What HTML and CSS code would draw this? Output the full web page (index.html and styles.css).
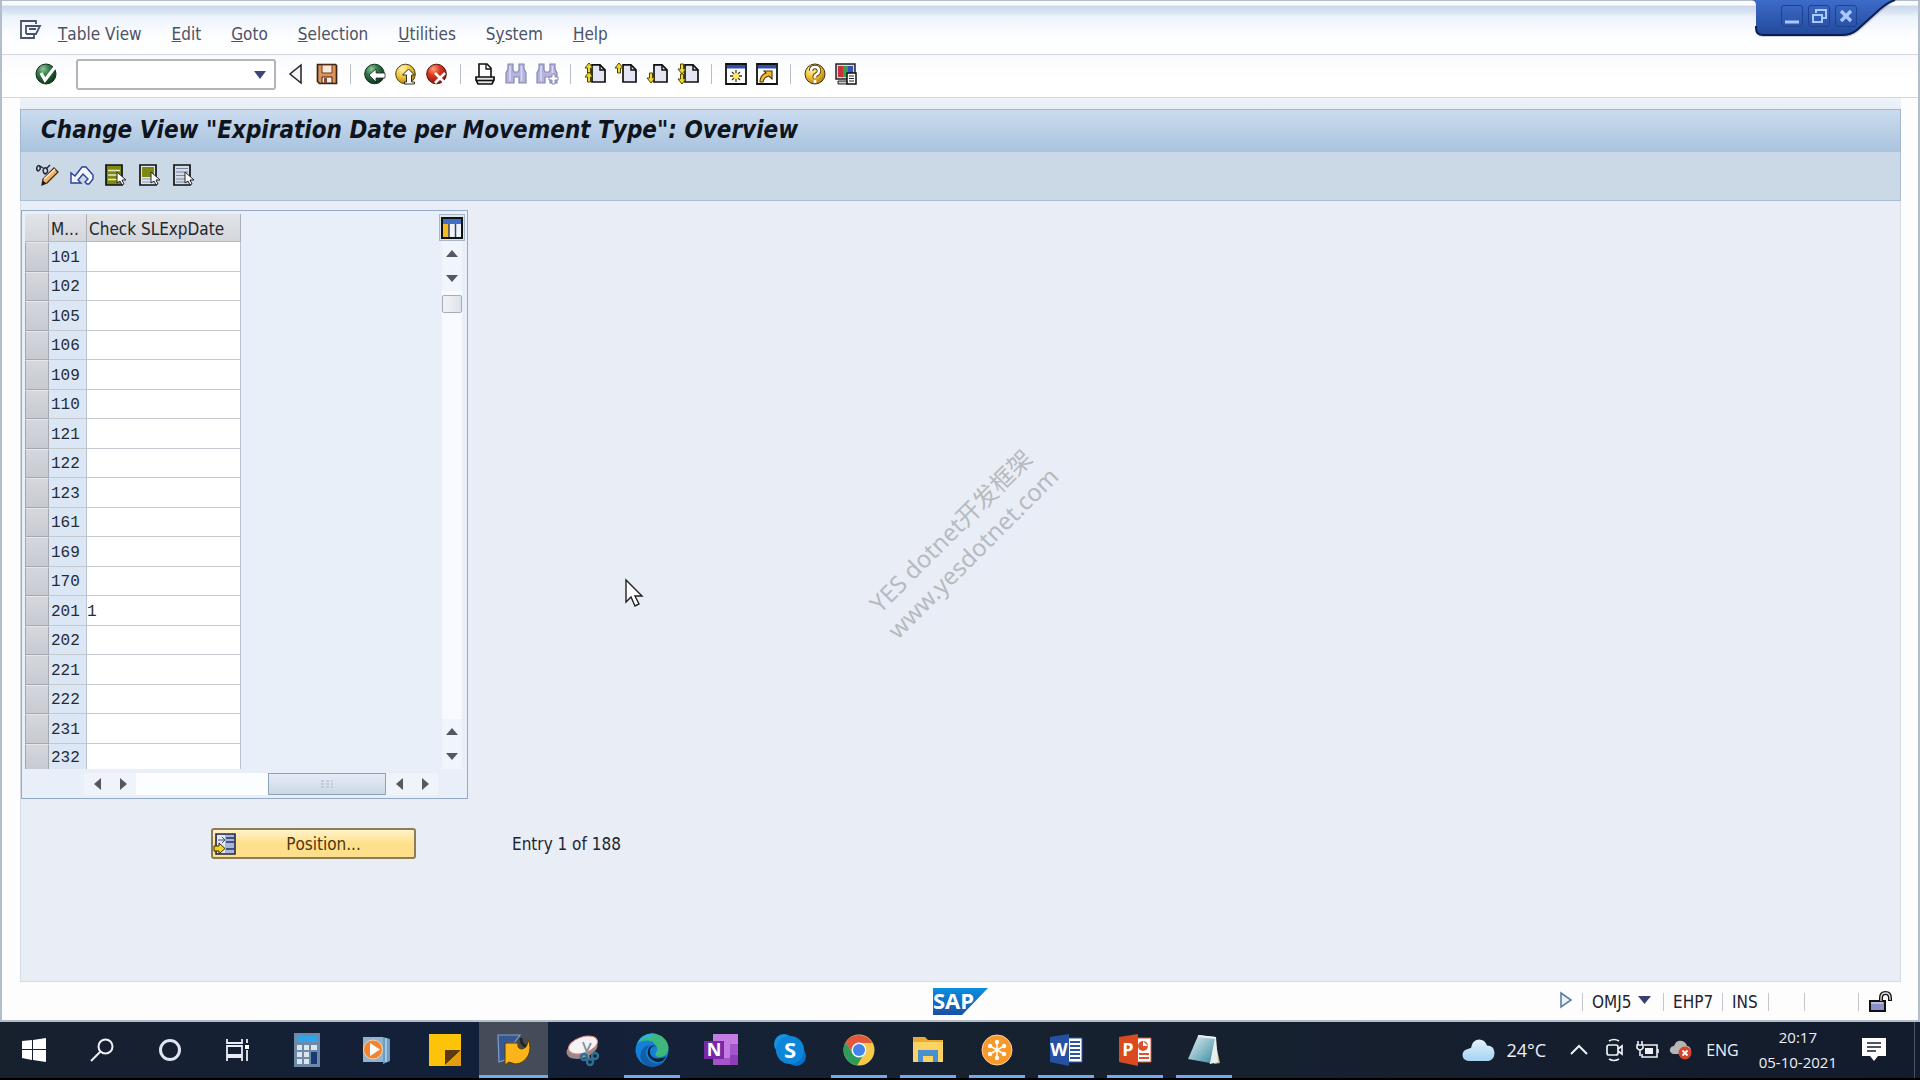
FILE: index.html
```html
<!DOCTYPE html>
<html lang="en">
<head>
<meta charset="utf-8">
<title>Change View "Expiration Date per Movement Type": Overview</title>
<link rel="stylesheet" href="styles.css">
</head>
<body>
<svg class="defs" aria-hidden="true">
  <defs>
    <radialGradient id="gGreen" cx=".35" cy=".25" r=".8"><stop offset="0" stop-color="#8fc79a"/><stop offset=".4" stop-color="#2f7a45"/><stop offset="1" stop-color="#0b3018"/></radialGradient>
    <radialGradient id="gGold" cx=".35" cy=".25" r=".8"><stop offset="0" stop-color="#fff6b0"/><stop offset=".5" stop-color="#f2c43a"/><stop offset="1" stop-color="#b07a10"/></radialGradient>
    <radialGradient id="gRed" cx=".35" cy=".25" r=".8"><stop offset="0" stop-color="#ffa080"/><stop offset=".4" stop-color="#dc3a20"/><stop offset="1" stop-color="#801008"/></radialGradient>
    <linearGradient id="gWin" x1="0" y1="0" x2="0" y2="1"><stop offset="0" stop-color="#3d6bc8"/><stop offset="1" stop-color="#224a9c"/></linearGradient>
    <linearGradient id="gSap" x1="0" y1="0" x2="0" y2="1"><stop offset="0" stop-color="#0a8fe0"/><stop offset="1" stop-color="#1a4fa5"/></linearGradient>
    <linearGradient id="gCloud" x1="0" y1="0" x2="0" y2="1"><stop offset="0" stop-color="#e2f1fc"/><stop offset="1" stop-color="#a5d2f2"/></linearGradient>
    <linearGradient id="gPad" x1="0" y1="0" x2="1" y2="1"><stop offset="0" stop-color="#e4f1f4"/><stop offset="1" stop-color="#3c8ba0"/></linearGradient>
    <g id="page"><path d="M0 .8h8l5 5V18H0z" fill="#e4e6f4" stroke="#111" stroke-width="1.7"/><path d="M8 1v5h5" fill="none" stroke="#111" stroke-width="1.5"/></g>
    <g id="binoc"><path d="M1 20V10L3 6V1h5v6l1 2h4l1-2V1h5v5l2 4v10h-7v-6h-5v6z" fill="#b4b5de" stroke="#8788b4" stroke-width="1.2"/><path d="M5 3v15M16.500 3v15" stroke="#d6d7f2" stroke-width="1.6"/></g>
    <path id="arrUp" d="M4 0l4 5H5.500v5h-3V5H0z" fill="#f0dc28" stroke="#4c4400" stroke-width="1"/>
    <path id="arrDn" d="M4 10l4-5H5.500V0h-3v5H0z" fill="#f0dc28" stroke="#4c4400" stroke-width="1"/>
    <path id="pick" d="M0 0v11l3-2 2 4 2-1-2-4h4z" fill="#fff" stroke="#223" stroke-width="1"/>
  </defs>
</svg>

<div class="window">
  <nav class="menubar" aria-label="Menu">
    <button class="menu-icon" aria-label="System menu"><svg width="22" height="20" viewBox="0 0 22 20" fill="none" stroke="#49526e" stroke-width="1.8"><path d="M16 4V1H1v17h13v-3M6 14V6h14l-4 8H6M6 6h12M9 9h7"/></svg></button>
    <a class="menu" href="#"><u>T</u>able View</a>
    <a class="menu" href="#"><u>E</u>dit</a>
    <a class="menu" href="#"><u>G</u>oto</a>
    <a class="menu" href="#"><u>S</u>election</a>
    <a class="menu" href="#"><u>U</u>tilities</a>
    <a class="menu" href="#">S<u>y</u>stem</a>
    <a class="menu" href="#"><u>H</u>elp</a>
  </nav>

  <div class="win-controls">
    <svg class="win-shape" width="148" height="40" viewBox="0 0 148 40"><path d="M0 0q4 1 4 6v24q0 7 7 7h80q9 0 15-5l24-21q9-8 16-11z" fill="#8e9bb8" opacity=".45"/><path d="M0 0q4 1 4 5v23q0 7 7 7h79q9 0 15-5l22-20q9-8 16-10z" fill="url(#gWin)"/><path d="M4 26v2q0 7 7 7h79q9 0 15-5l22-20q9-8 16-10" fill="none" stroke="#0c1e50" stroke-width="2"/></svg>
    <button class="win-btn" aria-label="Minimize"><svg width="20" height="20" viewBox="0 0 20 20"><path d="M3 16h14" stroke="#a9c9ff" stroke-width="3"/></svg></button>
    <button class="win-btn" aria-label="Restore"><svg width="20" height="20" viewBox="0 0 20 20" fill="none" stroke="#a9c9ff" stroke-width="2"><path d="M7 7V4h10v8h-3M4 9h9v7H4z"/></svg></button>
    <button class="win-btn" aria-label="Close"><svg width="20" height="20" viewBox="0 0 20 20"><path d="M5 5l10 10M15 5L5 15" stroke="#a9c9ff" stroke-width="3.400"/></svg></button>
  </div>

  <div class="toolbar">
    <button class="tool" aria-label="Enter"><svg width="22" height="22" viewBox="0 0 22 22"><circle cx="11" cy="11" r="10" fill="url(#gGreen)" stroke="#10301a"/><path d="M6 10l4 7L20 4" fill="none" stroke="#fff" stroke-width="3.200"/></svg></button>
    <span class="command"><input class="command-input" type="text" aria-label="Command"><svg class="command-arrow" width="12" height="8" viewBox="0 0 12 8"><path d="M0 0h12L6 8z" fill="#3c4678"/></svg></span>
    <button class="tool" aria-label="Collapse"><svg width="22" height="22" viewBox="0 0 22 22"><path d="M16 2v18L5 11z" fill="#f4f5f8" stroke="#222" stroke-width="1.500"/></svg></button>
    <button class="tool" aria-label="Save"><svg width="22" height="22" viewBox="0 0 22 22"><path d="M1.500 1.500h18l1 1v18h-17l-2-2z" fill="#dd945a" stroke="#3a2216" stroke-width="1.700"/><path d="M6 2h10v8H6z" fill="#fbe9dc" stroke="#6b3a20"/><path d="M6 14h10v6H6z" fill="#eee" stroke="#3a2216"/><path d="M8 15h3v5H8z" fill="#854a28"/></svg></button>
    <span class="sep"></span>
    <button class="tool" aria-label="Back"><svg width="22" height="22" viewBox="0 0 22 22"><circle cx="10.500" cy="11" r="9.800" fill="url(#gGreen)" stroke="#10301a"/><path d="M5 12l7-6v4h9v5h-9v4z" fill="#fff" stroke="#223" stroke-width=".8"/></svg></button>
    <button class="tool" aria-label="Exit"><svg width="22" height="22" viewBox="0 0 22 22"><circle cx="10.500" cy="11" r="9.800" fill="url(#gGold)" stroke="#554010"/><path d="M13.500 6l6 6h-3v7h3v2h-10v-2h2v-7h-4z" fill="#fff" stroke="#332" stroke-width="1"/></svg></button>
    <button class="tool" aria-label="Cancel"><svg width="22" height="22" viewBox="0 0 22 22"><circle cx="10.500" cy="11" r="9.800" fill="url(#gRed)" stroke="#571010"/><path d="M9 10l10 10M19 10L9 20" stroke="#fff" stroke-width="2.600"/></svg></button>
    <span class="sep"></span>
    <button class="tool" aria-label="Print"><svg width="22" height="22" viewBox="0 0 22 22"><path d="M5 14V1h8l4 4v9" fill="#fff" stroke="#111" stroke-width="1.600"/><path d="M12 1v5h5" fill="none" stroke="#111" stroke-width="1.300"/><path d="M2 14h18v3l-2 4H4l-2-4z" fill="#e6e7ee" stroke="#111" stroke-width="1.700"/><path d="M2 17.500h18" stroke="#111" stroke-width="1.600"/></svg></button>
    <button class="tool" aria-label="Find"><svg width="22" height="22" viewBox="0 0 22 22"><use href="#binoc"/></svg></button>
    <button class="tool" aria-label="Find next"><svg width="22" height="22" viewBox="0 0 22 22"><use href="#binoc"/><path d="M13 14h3v-3h3v3h3v3h-3v4h-3v-4h-3z" fill="#fff" stroke="#8788b4"/></svg></button>
    <span class="sep"></span>
    <button class="tool" aria-label="First page"><svg width="22" height="22" viewBox="0 0 22 22"><use href="#page" x="8" y="1"/><use href="#arrUp" x="1" y="0"/><use href="#arrUp" x="1" y="9"/></svg></button>
    <button class="tool" aria-label="Previous page"><svg width="22" height="22" viewBox="0 0 22 22"><use href="#page" x="8" y="1"/><use href="#arrUp" x="0" y="0"/></svg></button>
    <button class="tool" aria-label="Next page"><svg width="22" height="22" viewBox="0 0 22 22"><use href="#page" x="8" y="1"/><use href="#arrDn" x="1" y="10"/></svg></button>
    <button class="tool" aria-label="Last page"><svg width="22" height="22" viewBox="0 0 22 22"><use href="#page" x="8" y="1"/><use href="#arrDn" x="1" y="1"/><use href="#arrDn" x="1" y="11"/></svg></button>
    <span class="sep"></span>
    <button class="tool" aria-label="New session"><svg width="22" height="22" viewBox="0 0 22 22"><path d="M1 1h20v20H1z" fill="#fff" stroke="#111" stroke-width="1.800"/><path d="M2 2h18v3.500H2z" fill="#2d50ae"/><path d="M11 7v12M5 13h12M7 9l8 8M15 9l-8 8" stroke="#3d3a10" stroke-width="1.300"/><circle cx="11" cy="13" r="3" fill="#ffe95c"/></svg></button>
    <button class="tool" aria-label="Create shortcut"><svg width="22" height="22" viewBox="0 0 22 22"><path d="M1 1h20v20H1z" fill="#fff" stroke="#111" stroke-width="1.800"/><path d="M2 2h18v3.500H2z" fill="#2d50ae"/><path d="M8 8h8v8l-3-3q-5 1-6 6H4q0-7 6-9z" fill="#f4b930" stroke="#4c3806" stroke-width="1.100"/></svg></button>
    <span class="sep"></span>
    <button class="tool" aria-label="Help"><svg width="22" height="22" viewBox="0 0 22 22"><circle cx="11" cy="11" r="10" fill="url(#gGold)" stroke="#443408"/><path d="M7 8q0-4 4-4t4 4q0 2-2.500 3.500T11 15" fill="none" stroke="#5a4208" stroke-width="4.400"/><path d="M7 8q0-4 4-4t4 4q0 2-2.500 3.500T11 15M11 17v3" fill="none" stroke="#fff" stroke-width="2.600"/></svg></button>
    <button class="tool" aria-label="Customize layout"><svg width="22" height="22" viewBox="0 0 22 22"><path d="M1 1h19v15H1z" fill="#d6d8e2" stroke="#222" stroke-width="1.500"/><path d="M3 3h5v11H3z" fill="#c8323c"/><path d="M8 3h5v11H8z" fill="#38a04c"/><path d="M13 3h5v11h-5z" fill="#3654b8"/><path d="M3 18h9v3H3z" fill="#c7c9d4" stroke="#222"/><path d="M12 10h9v11h-9z" fill="#fff" stroke="#111" stroke-width="1.500"/><path d="M14 13h5M14 15.500h5M14 18h5" stroke="#222"/></svg></button>
  </div>

  <main class="screen">
    <h1 class="title">Change View "Expiration Date per Movement Type": Overview</h1>
    <div class="app-toolbar">
      <button class="tool" aria-label="Display or change"><svg width="24" height="22" viewBox="0 0 24 22"><path d="M1 3q2-3 3 0t-2 4q-2-1-1-4M7 6q2-4 4-1t-2 5q-2-1-2-4M4 2l3 2M11 4l3-3" fill="none" stroke="#223" stroke-width="1.400"/><path d="M6 21l1-6L18 4l4 4-11 11z" fill="#f3b265" stroke="#3b2a14" stroke-width="1.300"/><path d="M8 15L19 5" stroke="#ffe9c8" stroke-width="1.600"/><path d="M6 21l1-4 3 2z" fill="#111"/></svg></button>
      <button class="tool" aria-label="Undo"><svg width="24" height="20" viewBox="0 0 24 20"><path d="M1 8v10h10l-3-3 5-6 5 5-3 3 2 2h2l4-5v-4l-7-8h-4L5 11z" fill="#f4f7fe" stroke="#2c3f9a" stroke-width="1.400"/></svg></button>
      <button class="tool" aria-label="Select all"><svg width="22" height="22" viewBox="0 0 22 22"><path d="M1 1h16v20H1z" fill="#7c8a10" stroke="#111" stroke-width="1.700"/><path d="M3 6.500h12M3 11h12M3 15.500h12" stroke="#e5eac4" stroke-width="1.500"/><use href="#pick" x="12" y="8"/></svg></button>
      <button class="tool" aria-label="Select block"><svg width="22" height="22" viewBox="0 0 22 22"><path d="M1 1h16v20H1z" fill="#dfe6ee" stroke="#111" stroke-width="1.700"/><path d="M3 3h12v10H3z" fill="#7c8a10"/><path d="M3 15h12M3 18h12" stroke="#8c9aac"/><use href="#pick" x="12" y="8"/></svg></button>
      <button class="tool" aria-label="Deselect all"><svg width="22" height="22" viewBox="0 0 22 22"><path d="M1 1h16v20H1z" fill="#d3dce8" stroke="#111" stroke-width="1.700"/><path d="M3 4.500h12M3 8h12M3 11.500h12M3 15h12M3 18h12" stroke="#77859a" stroke-width="1.200"/><use href="#pick" x="12" y="8"/></svg></button>
    </div>

    <div class="content">
      <section class="table-control">
        <div class="table-area">
          <table class="grid">
            <thead><tr><th class="c-sel"></th><th class="c-mvt">M...</th><th class="c-chk">Check SLExpDate</th></tr></thead>
            <tbody>
              <tr><td class="sel"></td><td class="mvt">101</td><td><input class="cell" aria-label="Check 101"></td></tr>
              <tr><td class="sel"></td><td class="mvt">102</td><td><input class="cell" aria-label="Check 102"></td></tr>
              <tr><td class="sel"></td><td class="mvt">105</td><td><input class="cell" aria-label="Check 105"></td></tr>
              <tr><td class="sel"></td><td class="mvt">106</td><td><input class="cell" aria-label="Check 106"></td></tr>
              <tr><td class="sel"></td><td class="mvt">109</td><td><input class="cell" aria-label="Check 109"></td></tr>
              <tr><td class="sel"></td><td class="mvt">110</td><td><input class="cell" aria-label="Check 110"></td></tr>
              <tr><td class="sel"></td><td class="mvt">121</td><td><input class="cell" aria-label="Check 121"></td></tr>
              <tr><td class="sel"></td><td class="mvt">122</td><td><input class="cell" aria-label="Check 122"></td></tr>
              <tr><td class="sel"></td><td class="mvt">123</td><td><input class="cell" aria-label="Check 123"></td></tr>
              <tr><td class="sel"></td><td class="mvt">161</td><td><input class="cell" aria-label="Check 161"></td></tr>
              <tr><td class="sel"></td><td class="mvt">169</td><td><input class="cell" aria-label="Check 169"></td></tr>
              <tr><td class="sel"></td><td class="mvt">170</td><td><input class="cell" aria-label="Check 170"></td></tr>
              <tr><td class="sel"></td><td class="mvt">201</td><td><input class="cell" aria-label="Check 201" value="1"></td></tr>
              <tr><td class="sel"></td><td class="mvt">202</td><td><input class="cell" aria-label="Check 202"></td></tr>
              <tr><td class="sel"></td><td class="mvt">221</td><td><input class="cell" aria-label="Check 221"></td></tr>
              <tr><td class="sel"></td><td class="mvt">222</td><td><input class="cell" aria-label="Check 222"></td></tr>
              <tr><td class="sel"></td><td class="mvt">231</td><td><input class="cell" aria-label="Check 231"></td></tr>
              <tr><td class="sel"></td><td class="mvt">232</td><td><input class="cell" aria-label="Check 232"></td></tr>
            </tbody>
          </table>
          <div class="vbar">
            <button class="config" aria-label="Table settings"><svg width="22" height="22" viewBox="0 0 22 22"><path d="M1 1h20v20H1z" fill="#eef2fa" stroke="#111" stroke-width="2"/><path d="M2 2h18v5H2z" fill="#3c70c8"/><path d="M2 7h6v13H2z" fill="#f6bb20"/><path d="M8 7v13M14.500 7v13" stroke="#39455f" stroke-width="1.500"/></svg></button>
            <button class="arrow" aria-label="Scroll up"><svg width="12" height="7" viewBox="0 0 12 7"><path d="M0 7h12L6 0z" fill="#55585f"/></svg></button>
            <button class="arrow" aria-label="Page down"><svg width="12" height="7" viewBox="0 0 12 7"><path d="M0 0h12L6 7z" fill="#55585f"/></svg></button>
            <div class="vtrack"><div class="vthumb"></div></div>
            <button class="arrow" aria-label="Page up"><svg width="12" height="7" viewBox="0 0 12 7"><path d="M0 7h12L6 0z" fill="#55585f"/></svg></button>
            <button class="arrow" aria-label="Scroll down"><svg width="12" height="7" viewBox="0 0 12 7"><path d="M0 0h12L6 7z" fill="#55585f"/></svg></button>
          </div>
        </div>
        <div class="hbar">
          <button class="arrow" aria-label="Scroll left"><svg width="7" height="12" viewBox="0 0 7 12"><path d="M7 0v12L0 6z" fill="#55585f"/></svg></button>
          <button class="arrow" aria-label="Page right"><svg width="7" height="12" viewBox="0 0 7 12"><path d="M0 0v12l7-6z" fill="#55585f"/></svg></button>
          <div class="htrack"><div class="hthumb"><svg width="14" height="8" viewBox="0 0 14 8"><path d="M1 1h12M1 4h12M1 7h12" stroke="#a9b4c4" stroke-width="1" stroke-dasharray="3 2"/></svg></div></div>
          <button class="arrow" aria-label="Page left"><svg width="7" height="12" viewBox="0 0 7 12"><path d="M7 0v12L0 6z" fill="#55585f"/></svg></button>
          <button class="arrow" aria-label="Scroll right"><svg width="7" height="12" viewBox="0 0 7 12"><path d="M0 0v12l7-6z" fill="#55585f"/></svg></button>
        </div>
      </section>

      <div class="actions">
        <button class="position"><svg width="22" height="22" viewBox="0 0 22 22"><path d="M2 1h19v20H2z" fill="#a9b6dc" stroke="#222b48" stroke-width="1.600"/><path d="M3 2h8v18H3z" fill="#e3e7f2"/><path d="M12 5h8M12 9h8M12 16h8" stroke="#26325a" stroke-width="1.500"/><path d="M4 7h6M8 4l3 3-3 3" stroke="#444e6e" fill="none"/><path d="M0 13h5v-3l6 5.500L5 21v-3H0z" fill="#f6d422" stroke="#332a08"/></svg><span class="position-label">Position...</span></button>
        <span class="entry">Entry 1 of 188</span>
      </div>
    </div>
  </main>

  <footer class="statusbar">
    <span></span>
    <svg width="55" height="27" viewBox="0 0 55 27"><path d="M0 0h55L29 27H0z" fill="url(#gSap)"/><text class="sap-text" x="0" y="21">SAP</text></svg>
    <div class="status-cells">
      <button class="st-tri" aria-label="Show details"><svg width="12" height="16" viewBox="0 0 12 16"><path d="M1 1l10 7-10 7z" fill="#e8f2fa" stroke="#5e7ea4" stroke-width="1.600"/></svg></button>
      <span class="st st-tcode">OMJ5 <svg width="13" height="8" viewBox="0 0 13 8"><path d="M0 0h13L6.500 8z" fill="#394070"/></svg></span>
      <span class="st st-sys">EHP7</span>
      <span class="st st-ins">INS</span>
      <span class="st st-a"></span>
      <span class="st st-b"></span>
      <span class="st st-lock"><svg width="24" height="22" viewBox="0 0 24 22"><path d="M2 10h15v10H2z" fill="#8d90c6" stroke="#111" stroke-width="2"/><path d="M3 12h12" stroke="#c9cbe8" stroke-width="1.500"/><path d="M13 9V7q0-5 4.500-5T22 7v3" fill="none" stroke="#111" stroke-width="4"/><path d="M13 10V7q0-5 4.500-5T22 7v2" fill="none" stroke="#e4e4ea" stroke-width="1.300"/></svg></span>
    </div>
  </footer>
</div>

<div class="taskbar">
  <div class="system-buttons">
    <button class="task" aria-label="Start"><svg width="24" height="24" viewBox="0 0 24 24" fill="#fff"><path d="M0 3l10-1v9H0zM11 2l13-2v11H11zM0 12h10v10L0 20zM11 12h13v12l-13-2z"/></svg></button>
    <button class="task" aria-label="Search"><svg width="24" height="24" viewBox="0 0 24 24" fill="none" stroke="#eef1f6" stroke-width="2"><circle cx="15.500" cy="8.500" r="7"/><path d="M10.500 13.500L1 23"/></svg></button>
    <button class="task" aria-label="Cortana"><svg width="24" height="24" viewBox="0 0 24 24"><circle cx="12" cy="12" r="9.500" fill="none" stroke="#dfe6f2" stroke-width="3"/></svg></button>
    <button class="task" aria-label="Task view"><svg width="24" height="24" viewBox="0 0 24 24" fill="none" stroke="#e9edf4" stroke-width="1.800"><path d="M1 1v4h15V1M1 8h15v9H1zM1 23v-4h15v4M21 1v4M21 12v11"/><path d="M19 7h4v4h-4z" fill="#fff" stroke="none"/></svg></button>
  </div>
  <div class="apps">
    <button class="task" aria-label="Calculator"><svg width="28" height="34" viewBox="0 0 28 34"><path d="M1 0h26v34H1z" fill="#6f8aa6"/><path d="M4 3h20v6H4z" fill="#2ea4ea"/><path d="M4 12h5v5H4zM11 12h5v5h-5zM18 12h6v5h-6zM4 19h5v5H4zM11 19h5v5h-5zM4 26h5v5H4zM11 26h5v5h-5z" fill="#dbe5f0"/><path d="M18 19h6v12h-6z" fill="#173a72"/></svg></button>
    <button class="task" aria-label="Media player"><svg width="30" height="28" viewBox="0 0 30 28"><path d="M2 1h20v25H2z" fill="#8fb4d2"/><path d="M22 1l7 2v22l-7 3z" fill="#6d9cc4"/><path d="M25 2v24" stroke="#b7d3ea" stroke-width="1.500"/><circle cx="12" cy="13.500" r="9.500" fill="#ee8434" stroke="#ffd3a8"/><path d="M9 7l10 6.500L9 20z" fill="#fff"/></svg></button>
    <button class="task" aria-label="Sticky notes"><svg width="32" height="32" viewBox="0 0 32 32"><path d="M0 0h32v32H0z" fill="#fdc308"/><path d="M16 16h16L16 31z" fill="#5c3a12"/><path d="M32 16v16H16z" fill="#e39c10"/></svg></button>
    <button class="task active running" aria-label="SAP Logon"><svg width="34" height="32" viewBox="0 0 34 32"><path d="M1 1h22l-6 8H11v16l-9 3z" fill="#34588f" stroke="#7f9fd0" stroke-width="1.200"/><path d="M8 9h13q-1 6 4 6 6-1 6-10 4 9 0 17-5 8-13 8l-6-2-4 3z" fill="#fbb41a" stroke="#5a3c08"/><path d="M24 4q0 7 5 8" stroke="#2a2418" stroke-width="3" fill="none"/></svg></button>
    <button class="task" aria-label="Snipping tool"><svg width="34" height="32" viewBox="0 0 34 32"><ellipse cx="16" cy="15" rx="16" ry="9" transform="rotate(-18 16 15)" fill="#9b8688"/><ellipse cx="17" cy="11" rx="15" ry="8" transform="rotate(-18 17 11)" fill="#f6f2f4" stroke="#d8847e"/><path d="M17 8l6 16M25 9l-7 14" stroke="#8795a5" stroke-width="2"/><g fill="none" stroke="#2f7194" stroke-width="2.400"><circle cx="24" cy="28" r="3"/><circle cx="29" cy="22" r="3"/><circle cx="18" cy="23" r="3"/></g></svg></button>
    <button class="task running" aria-label="Edge"><svg width="34" height="34" viewBox="0 0 34 34"><circle cx="17" cy="17" r="16.500" fill="#1380d8"/><path d="M2 11Q7 0 18 .5 31 2 33.500 14q0 9-8 10-6 0-5-4 3-3 1-7-5-7-13-5-5 1-6.500 3z" fill="#3db77a"/><path d="M2 12Q7 3 17 5q-2-4 4-4l-4-.5Q6 1 2 12z" fill="#2fb2de"/><path d="M15 12q-7 6-2 14 6 7 16 3-6 6-14 4.500Q3 30 6 19q3-7 9-7z" fill="#155da8"/><path d="M21 13q-7 0-6 7 2 7 11 5 3 0 5-2-4 9-12 5-8-4-6-11 2-6 8-4z" fill="#142238"/></svg></button>
    <button class="task" aria-label="OneNote"><svg width="34" height="32" viewBox="0 0 34 32"><path d="M9 0h25v31H9z" fill="#c57be4"/><path d="M26 10h8v11h-8z" fill="#a257cc"/><path d="M26 21h8v10h-8z" fill="#8c3fb9"/><path d="M9 24h17v7H9z" fill="#a354c7"/><path d="M0 7h20v18H0z" fill="#7829a8"/><text class="tile-text" x="10" y="22">N</text></svg></button>
    <button class="task" aria-label="Skype"><svg width="32" height="32" viewBox="0 0 32 32"><circle cx="10" cy="10" r="10" fill="#1494e0"/><circle cx="22" cy="22" r="10" fill="#0870c8"/><circle cx="16" cy="16" r="14" fill="#0d86da"/><text class="skype-text" x="16" y="24">S</text></svg></button>
    <button class="task running" aria-label="Chrome"><svg width="32" height="32" viewBox="0 0 32 32"><circle cx="16" cy="16" r="15.500" fill="#f6c94a"/><path d="M2.600 8.200A15.500 15.500 0 0 1 29.400 9H16l-6 11z" fill="#e3573e"/><path d="M2.600 8.200A15.500 15.500 0 0 0 14 31.400l7-11.400-11 0z" fill="#2e9a5c"/><circle cx="16" cy="16" r="7.500" fill="#f2f5f8"/><circle cx="16" cy="16" r="6" fill="#4285ea"/></svg></button>
    <button class="task running" aria-label="File Explorer"><svg width="32" height="26" viewBox="0 0 32 26"><path d="M1 0h12l3 3h15v22H1z" fill="#e8ac30"/><path d="M1 5h30v20H1z" fill="#fcd265"/><path d="M6 13h20v12h-5v-6H11v6H6z" fill="#4a90cc"/></svg></button>
    <button class="task running" aria-label="GoTo"><svg width="32" height="32" viewBox="0 0 32 32"><circle cx="16" cy="16" r="15" fill="#f8982a" stroke="#ffd39a"/><path d="M16 8v16M9 12l14 8M23 12L9 20" stroke="#fff" stroke-width="1.500"/><g fill="#fff"><circle cx="16" cy="8" r="2.200"/><circle cx="16" cy="24" r="2.200"/><circle cx="9" cy="12" r="2.200"/><circle cx="23" cy="20" r="2.200"/><circle cx="23" cy="12" r="2.200"/><circle cx="9" cy="20" r="2.200"/></g></svg></button>
    <button class="task running" aria-label="Word"><svg width="32" height="32" viewBox="0 0 32 32"><path d="M18 4h14v24H18z" fill="#fff" stroke="#2b55a4"/><path d="M20 8h10M20 12h10M20 16h10M20 20h10M20 24h10" stroke="#2b55a4" stroke-width="1.800"/><path d="M0 3l19-3v32L0 28z" fill="#2650a2"/><text class="tile-text" x="9" y="22">W</text></svg></button>
    <button class="task running" aria-label="PowerPoint"><svg width="32" height="32" viewBox="0 0 32 32"><path d="M18 4h14v24H18z" fill="#fff" stroke="#d35230"/><circle cx="24" cy="12" r="5" fill="#d9532c"/><path d="M24 12V7l5 5z" fill="#fff"/><path d="M20 20h10M20 24h10" stroke="#d9532c" stroke-width="1.800"/><path d="M0 3l19-3v32L0 28z" fill="#d94a20"/><text class="tile-text" x="9" y="22">P</text></svg></button>
    <button class="task running" aria-label="Notepad"><svg width="32" height="32" viewBox="0 0 32 32"><path d="M26 2l6 27-6 1z" fill="#c9b98e"/><path d="M10 1l18 2 2 25-8 2z" fill="#e9eef0"/><path d="M10 2l17 2-5 25L0 25z" fill="url(#gPad)"/><path d="M10 2l17 2" stroke="#eceff2" stroke-width="2"/></svg></button>
  </div>
  <div class="tray">
    <span class="weather"><svg width="32" height="23" viewBox="0 0 32 23"><path d="M6 22a6 6 0 0 1-1-12Q7 9 8 9 9 1 16 .500q6 0 8 6 7 0 7.500 7 0 7-6 8.500z" fill="url(#gCloud)"/></svg>24°C</span>
    <svg class="t-chev" width="18" height="10" viewBox="0 0 18 10"><path d="M1 9l8-8 8 8" fill="none" stroke="#eef0f4" stroke-width="2"/></svg>
    <svg class="t-meet" width="18" height="24" viewBox="0 0 18 24" fill="none" stroke="#eef0f4" stroke-width="1.700"><path d="M3 3q5-3 10 0M3 21q5 3 10 0"/><rect x="1" y="7" width="11" height="10" rx="2"/><path d="M12 11l4-3v8l-4-3"/></svg>
    <svg class="t-batt" width="24" height="18" viewBox="0 0 24 18" fill="none" stroke="#eef0f4" stroke-width="1.600"><path d="M8 4h13v12H6v-3M22 8v4M2 0v4M6 0v4M1 4h6v3q-3 4-6 0zM4 9v6"/><path d="M9 7h8v6H9z" fill="#eef0f4" stroke="none"/></svg>
    <svg class="t-cloud" width="24" height="20" viewBox="0 0 24 20"><path d="M4 14q-4-2-3-5 1-3 4-3 2-6 8-5 4 1 5 5 3 0 4 4l-1 4z" fill="#b7b4b4"/><circle cx="16" cy="13" r="6.500" fill="#d8432c"/><path d="M13.500 10.500l5 5M18.500 10.500l-5 5" stroke="#fff" stroke-width="1.800"/></svg>
    <span class="lang">ENG</span>
    <time class="clock"><span>20:17</span><span>05-10-2021</span></time>
    <button class="notif" aria-label="Notifications"><svg width="24" height="24" viewBox="0 0 24 24"><path d="M0 0h24v18h-8l-4 5-4-5H0z" fill="#fff"/><path d="M5 5h14M5 9h14M5 13h9" stroke="#161e2c" stroke-width="1.600"/></svg></button>
  </div>
</div>

<div class="watermark">YES dotnet开发框架<br>www.yesdotnet.com</div>
<svg class="cursor" width="18" height="28" viewBox="0 0 18 28"><path d="M1 1v22l5-5 4 9 4-2-4-8h7z" fill="#fff" stroke="#222" stroke-width="1.400"/></svg>
</body>
</html>
```
FILE: styles.css
```css
* { box-sizing: border-box; }

body {
  margin: 0;
  min-height: 100vh;
  display: flex;
  flex-direction: column;
  position: relative;
  font-family: "DejaVu Sans Condensed", "DejaVu Sans", sans-serif;
  font-stretch: condensed;
  font-kerning: none;
  font-size: 17px;
  color: #1e2430;
  background: #000;
}

button {
  font: inherit;
  color: inherit;
  padding: 0;
  border: 0;
  background: none;
  display: flex;
  align-items: center;
  justify-content: center;
}

svg { display: block; flex: none; overflow: visible; }
.defs { position: absolute; width: 0; height: 0; }

/* Application window */
.window {
  flex: 1;
  display: flex;
  flex-direction: column;
  position: relative;
  border: 1px solid #b4bdcc;
  border-width: 1px 2px 2px;
  background: #fdfdfe;
}

.menubar {
  height: 54px;
  display: flex;
  align-items: center;
  gap: 30px;
  padding: 12px 18px 0;
  border-bottom: 1px solid #d2d6de;
  background: linear-gradient(#fafcff 0, #fafcff 4px, #cbd8ea 5px, #d6e1f1 10px, #edf3fc 16px, #fcfdff 34px, #fefefe);
}

.menu-icon { margin: 0 -14px 8px 0; }
.menu { color: #4c5264; text-decoration: none; }

.win-controls {
  position: absolute;
  top: 0;
  right: 22px;
  width: 144px;
  height: 36px;
  display: flex;
  gap: 5px;
  padding: 4px 0 0 29px;
}
.win-shape { position: absolute; top: -1px; left: 0; }
.win-btn {
  position: relative;
  width: 22px;
  height: 22px;
  border: 1px solid #1c4291;
  border-radius: 3px;
}

.toolbar {
  height: 43px;
  display: flex;
  align-items: center;
  padding: 0 28px 4px;
  border-bottom: 1px solid #d2d6de;
  background: linear-gradient(#f9fafc, #fff 60%);
}
.tool { width: 31px; height: 31px; }
.sep { width: 1px; height: 20px; margin: 0 8px; background: #b9bdc7; }

.command { position: relative; margin: 0 4px 0 15px; }
.command-input {
  display: block;
  width: 200px;
  height: 31px;
  padding: 0 24px 0 4px;
  border: 2px solid #b1b4ba;
  border-radius: 3px;
  background: #fff;
  font: inherit;
}
.command-arrow { position: absolute; right: 10px; top: 12px; }

/* Screen area */
.screen {
  flex: 1;
  display: flex;
  flex-direction: column;
  margin: 0 17px 0 18px;
  padding-top: 11px;
  background: linear-gradient(#eef2f9, #e9eef6 11px);
}

.title {
  margin: 0;
  height: 44px;
  padding: 0 20px;
  border: 1px solid #a1b7d0;
  border-bottom-color: #c9daea;
  background: linear-gradient(#cbdcef, #b9cfe6 50%, #a9c3de);
  font-size: 24px;
  line-height: 40px;
  font-weight: bold;
  font-style: italic;
  color: #10141c;
}

.app-toolbar {
  height: 48px;
  display: flex;
  align-items: center;
  gap: 3px;
  padding: 0 11px 4px;
  border: 1px solid #a9bdd3;
  border-top: 0;
  background: #cbd9e7;
}

.content {
  flex: 1;
  padding: 9px 0 24px;
  border: 1px solid #d5dce8;
  border-top: 0;
  background: #e9eef6;
}

/* Table control */
.table-control {
  width: 447px;
  padding: 3px 2px 3px 3px;
  border: 1px solid #93abc8;
  background: #e9eff8;
}
.table-area { display: flex; justify-content: space-between; }

.grid { border-collapse: separate; border-spacing: 0; table-layout: fixed; width: 216px; }
.grid th {
  height: 28px;
  padding: 2px 2px 0;
  overflow: hidden;
  white-space: nowrap;
  text-align: left;
  font-weight: normal;
  color: #23262d;
  border-right: 1px solid #a9adb5;
  border-bottom: 1px solid #b7bbc4;
  background: linear-gradient(#e2e4e8, #d3d6db);
}
.c-sel { width: 24px; }
.c-mvt { width: 38px; }
.grid td {
  height: 30px;
  padding: 2px 0 0;
  border-right: 1px solid #b9c2cf;
  border-bottom: 1px solid #c5c9cf;
  background: #fff;
}
.grid tr:nth-child(even) td { height: 29px; }
.grid tr:last-child td { height: 25px; border-bottom: 0; }
.grid td.sel {
  border: 1px solid #a4a8b1;
  border-top-color: #e6e7ec;
  background: linear-gradient(#d5d7dd, #c7cad1);
}
.grid td.mvt { padding-left: 2px; background: #dce7f6; }
.mvt, .cell { font-family: "Liberation Mono", monospace; font-size: 16px; color: #252b39; }
.cell {
  display: block;
  width: 100%;
  height: 20px;
  padding: 0;
  border: 0;
  background: transparent;
}

.vbar { width: 26px; display: flex; flex-direction: column; align-items: center; }
.config { width: 26px; height: 27px; border: 1px solid #a9b6c8; background: #dfe4ec; }
.vbar .arrow { width: 20px; height: 25px; background: #f0f4fb; }
.vtrack { flex: 1; width: 20px; padding-top: 4px; background: #f8faff; }
.vthumb {
  height: 18px;
  border: 1px solid #a4abb9;
  border-radius: 2px;
  background: linear-gradient(90deg, #f2f3f7, #dfe2ea);
}

.hbar { display: flex; margin: 4px 27px 0 59px; height: 22px; }
.hbar .arrow { width: 26px; background: #eff3fa; }
.htrack { flex: 1; display: flex; justify-content: flex-end; background: #fcfdff; }
.hthumb {
  width: 118px;
  display: flex;
  align-items: center;
  justify-content: center;
  border: 1px solid #8fa2bc;
  background: linear-gradient(#e6edf6, #cbd7e6);
}

.actions { display: flex; align-items: center; gap: 96px; padding: 29px 0 0 190px; }
.position {
  width: 205px;
  height: 31px;
  padding: 0 3px 0 2px;
  border: 2px solid #8d7c58;
  border-radius: 3px;
  background: linear-gradient(#fff3cb, #ffe08a 50%, #fddf8c);
  color: #4a3814;
}
.position svg { margin-left: -1px; }
.position-label { flex: 1; text-align: center; }

/* Status bar */
.statusbar {
  height: 38px;
  display: grid;
  grid-template-columns: 1fr 55px 1fr;
  align-items: center;
  background: #fdfdfe;
}
.sap-text { font: bold 22px "Open Sans", sans-serif; fill: #fff; }
.status-cells { display: flex; justify-content: flex-end; align-items: center; padding: 2px 26px 0 0; }
.st { display: flex; align-items: center; gap: 7px; height: 18px; padding-left: 9px; border-left: 1px solid #c3c6cd; }
.st-tri { margin: 0 10px 5px 0; }
.st-tcode { width: 81px; }
.st-tcode svg { margin-bottom: 4px; }
.st-sys { width: 59px; }
.st-ins { width: 46px; }
.st-a { width: 36px; }
.st-b { width: 54px; }

/* Taskbar */
.taskbar {
  height: 58px;
  display: flex;
  border-bottom: 2px solid #000;
  background: linear-gradient(90deg, #18202e, #12203a 25%, #172231 50%, #131c2c);
  color: #eef0f4;
  font-family: "Open Sans", "Noto Sans", sans-serif;
  font-stretch: normal;
  font-size: 18px;
}
.system-buttons, .apps { display: flex; }
.task { width: 68px; height: 56px; }
.apps .task { width: 69px; }
.running {
  background: linear-gradient(#76a9ea, #76a9ea) center bottom / 56px 3px no-repeat;
}
.task.active { background: linear-gradient(#76a9ea, #76a9ea) center bottom / 69px 3px no-repeat, #444c5a; }
.tile-text { font: bold 18px "Open Sans", sans-serif; fill: #fff; text-anchor: middle; }
.skype-text { font: bold 22px "Open Sans", sans-serif; fill: #fff; text-anchor: middle; }

.tray {
  margin-left: auto;
  margin-right: 5px;
  padding-right: 28px;
  border-right: 1px solid #4b5361;
  display: flex;
  align-items: center;
}
.weather { display: flex; align-items: center; gap: 12px; margin-right: 24px; }
.t-chev { margin-right: 18px; }
.t-meet { margin-right: 12px; }
.t-batt { margin-right: 9px; }
.t-cloud { margin-right: 13px; }
.lang { font-size: 16px; margin-right: 20px; }
.clock { display: flex; flex-direction: column; align-items: center; font-size: 15px; line-height: 25px; margin-right: 25px; }

/* Overlays */
.watermark {
  position: absolute;
  left: 50%;
  top: 50%;
  padding-top: 4px;
  transform: translate(-50%, -50%) rotate(-45deg);
  font: 24px/31px "Noto Sans", "Noto Sans CJK SC", sans-serif;
  text-align: center;
  white-space: nowrap;
  color: #b7babe;
  pointer-events: none;
}
.cursor { position: absolute; left: 625px; top: 579px; }
```
